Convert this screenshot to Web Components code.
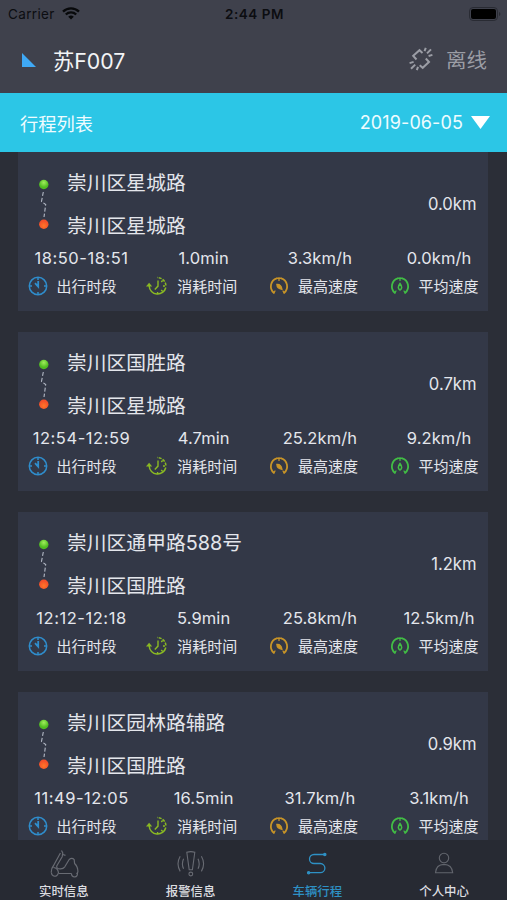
<!DOCTYPE html>
<html lang="zh-CN">
<head>
<meta charset="utf-8">
<title>行程列表</title>
<style>
    html, body { margin: 0; height: 100%; overflow: hidden; background: #2b2e37; }
</style>
</head>
<body>
<trip-app></trip-app>

<script>
const trips = [
    { from: "崇川区星城路", to: "崇川区星城路", distance: "0.0km", values: ["18:50-18:51", "1.0min", "3.3km/h", "0.0km/h"] },
    { from: "崇川区国胜路", to: "崇川区星城路", distance: "0.7km", values: ["12:54-12:59", "4.7min", "25.2km/h", "9.2km/h"] },
    { from: "崇川区通甲路588号", to: "崇川区国胜路", distance: "1.2km", values: ["12:12-12:18", "5.9min", "25.8km/h", "12.5km/h"] },
    { from: "崇川区园林路辅路", to: "崇川区国胜路", distance: "0.9km", values: ["11:49-12:05", "16.5min", "31.7km/h", "3.1km/h"] }
];

const stats = [
    { icon: "clock", label: "出行时段" },
    { icon: "elapsed", label: "消耗时间" },
    { icon: "gaugeMax", label: "最高速度" },
    { icon: "gaugeAvg", label: "平均速度" }
];

const icons = {
    wifi: `<svg width="18" height="13" viewBox="0 0 18 13" fill="none" stroke="#08090b" stroke-width="2.3">
        <path d="M1 4.6a11.4 11.4 0 0 1 16 0M3.8 7.5a7.4 7.4 0 0 1 10.4 0"/>
        <path d="M9 12.6L6.2 9.8a4 4 0 0 1 5.6 0z" fill="#08090b" stroke="none"/></svg>`,
    battery: `<svg width="32" height="14" viewBox="0 0 32 14">
        <rect x=".5" y=".5" width="28" height="13" rx="3.6" fill="none" stroke="#292b33"/>
        <rect x="2" y="2" width="25" height="10" rx="2" fill="#000"/>
        <path d="M30 5v4q1.4-.6 1.4-2T30 5z" fill="#292b33"/></svg>`,
    offline: `<svg width="26" height="26" viewBox="0 0 26 26" fill="none" stroke="#9b9da5" stroke-width="2">
        <path d="M8.500 13.500L5.200 9.800 11.500 4.200l3 2.700M17.800 12.500l3.200 3.500-6.300 5.800-3-2.600"/>
        <path d="M16.500 5.200l1.300-3.300M19 7.400l4-4M20.600 10l3.800-1.100M1.600 17.100l4-1.200M3 22.800l4.200-4.200M8.800 24.200l1.200-3.300"/></svg>`,
    route: `<svg width="14" height="54" viewBox="0 0 14 54">
        <defs>
            <radialGradient id="g" cy=".3"><stop offset="0" stop-color="#a0ec5c"/><stop offset="1" stop-color="#4fbd20"/></radialGradient>
            <radialGradient id="r" cy=".65"><stop offset="0" stop-color="#ff7728"/><stop offset="1" stop-color="#f4502a"/></radialGradient>
        </defs>
        <path d="M6.3 14L4.5 23.5l4.2 3L7 39" fill="none" stroke="#b4bac6" stroke-width="1.1" stroke-dasharray="4 2"/>
        <circle cx="6.8" cy="6.5" r="4.7" fill="url(#g)"/><circle cx="6.8" cy="46.3" r="4.7" fill="url(#r)"/></svg>`,
    clock: `<svg width="20" height="20" viewBox="0 0 20 20" fill="none" stroke="#2f8dcc" stroke-width="1.5">
        <circle cx="10" cy="10" r="8.7"/><path d="M10 1v3M10 16v3M1 10h3M16 10h3"/>
        <path d="M10.2 5v5.700L7 7.200" stroke-width="1.8"/></svg>`,
    elapsed: `<svg width="22" height="20" viewBox="0 0 22 20" fill="none" stroke="#8ab923" stroke-width="1.5">
        <path d="M3.200 10a8.400 8.400 0 0 0 16.600 1.500"/><path d="M19.900 9.500a8.400 8.400 0 0 0-8.900-7.900" stroke-dasharray="3 1.2"/>
        <path d="M0 10.600l3.100-3.800 3.100 3.800z" fill="#8ab923" stroke="none"/>
        <path d="M12 4.500v5.600L8.800 13.500M11.600 16v2M17 10h2M15.200 14l1.500 1.400M15.300 6l1.300-1.400" stroke-width="1.4"/></svg>`,
    gaugeMax: `<svg width="20" height="20" viewBox="0 0 20 20" fill="none" stroke="#c79428" stroke-width="1.8" stroke-linecap="round">
        <path d="M4.8 16.8a8.5 8.5 0 0 1 3-14.5M12.2 2.3a8.5 8.5 0 0 1 3 14.5"/><path d="M7.800 2.300q2.200-.6 4.400 0M10 1.9v2.500M4.8 16.8L6 15M15.2 16.8L14 15" stroke-width="1.3"/>
        <path d="M7.800 8.3q4.300-.5 5.200 5-5-.3-5.200-5z" fill="#c79428" stroke-width="1.2"/></svg>`,
    gaugeAvg: `<svg width="20" height="20" viewBox="0 0 20 20" fill="none" stroke="#42bd45" stroke-width="1.8" stroke-linecap="round">
        <path d="M4.8 16.8a8.5 8.5 0 0 1 3-14.5M12.2 2.3a8.5 8.5 0 0 1 3 14.5"/><path d="M7.800 2.300q2.200-.6 4.400 0M10 1.9v2.500M4.8 16.8L6 15M15.2 16.8L14 15" stroke-width="1.3"/>
        <path d="M10 7.500q3.400 4.5 0 6.500Q6.600 12 10 7.500z" stroke-width="1.5"/></svg>`,
    scooter: `<svg width="30" height="30" viewBox="0 0 30 30" fill="none" stroke="#686b73" stroke-width="1.2" stroke-linejoin="round">
        <path d="M12.500 1.500l1.300 2.500-.6 3.700-5.500 9.300q-.4 2.800 3.300 2.800 3.200.2 4.800-2l4.400-7.300q2.800-2.200 5 .2l.4 3.800q3.400 3.200 3.300 8.500l-1.300 1.800"/>
        <path d="M11.400 4L4.600 16.500Q2 19.500 2.200 23.500M13.800 5.500l2.700.9M9.300 24.500h13.200M4.500 18.500q4.500.5 5 5.500"/>
        <path d="M2.500 23.500a3.300 3.300 0 1 0 6.600.8M22.500 24.500a3 3 0 1 0 5.800-.5"/></svg>`,
    alarm: `<svg width="30" height="30" viewBox="0 0 30 30" fill="none" stroke="#686b73" stroke-width="1.1">
        <path d="M10.800 3.200q4-1.200 8 0l-2.400 17.600h-3.200z"/><circle cx="14.800" cy="25" r="1.900"/>
        <path d="M7.600 9.800q-2.400 5.200 0 10M4.200 7.200q-4.400 7.600 0 15.200M22 9.800q2.400 5.200 0 10M25.400 7.200q4.400 7.600 0 15.200"/></svg>`,
    track: `<svg width="30" height="30" viewBox="0 0 30 30" fill="none" stroke="#2e91c5" stroke-width="1.300">
        <path d="M22.500 5.500H12a4.500 4.500 0 0 0 0 9h6.300a4.500 4.500 0 0 1 0 9.200H6.800"/>
        <circle cx="22.800" cy="5.500" r="1.100" fill="#2e91c5"/><circle cx="6.600" cy="23.700" r="1.100" fill="#2e91c5"/></svg>`,
    person: `<svg width="30" height="30" viewBox="0 0 30 30" fill="none" stroke="#62656d" stroke-width="1.1">
        <circle cx="15" cy="9" r="4.700"/><path d="M6.500 23.700q.6-8 8.500-8.300 7.900.3 8.700 8.300z"/></svg>`
};

customElements.define("status-bar", class extends HTMLElement {
    constructor() {
        super();
        this.attachShadow({ mode: "open" });
        this.shadowRoot.innerHTML = `
            <style>
                :host {
                    display: grid;
                    grid-template-columns: 1fr auto 1fr;
                    align-items: center;
                    height: 27px;
                    padding: 0 6px 0 8px;
                    color: #0c0d11;
                    font-size: 13.5px;
                }
                div { display: flex; align-items: center; gap: 7px; letter-spacing: .35px; }
                b { font-weight: 600; font-size: 13.5px; letter-spacing: .5px; }
                .right { justify-content: flex-end; }
                svg { display: block; }
            </style>
            <div><span>Carrier</span>${icons.wifi}</div>
            <b>2:44 PM</b>
            <div class="right">${icons.battery}</div>
        `;
    }
});

customElements.define("vehicle-header", class extends HTMLElement {
    constructor() {
        super();
        this.attachShadow({ mode: "open" });
        this.shadowRoot.innerHTML = `
            <style>
                :host {
                    display: flex;
                    align-items: center;
                    height: 66px;
                    padding: 0 20px 2px 22px;
                    box-sizing: border-box;
                    color: #f3f4f6;
                    font-size: 21.3px;
                }
                .mark {
                    width: 14px;
                    height: 14px;
                    margin: 2px 17px 0 0;
                    background: #3fa9f5;
                    clip-path: polygon(0 0, 100% 100%, 0 100%);
                }
                .state {
                    display: flex;
                    align-items: center;
                    gap: 12px;
                    margin-left: auto;
                    color: #9b9da5;
                    font-size: 20.5px;
                }
                svg { display: block; }
            </style>
            <div class="mark"></div>
            <slot></slot>
            <div class="state">${icons.offline}<slot name="state"></slot></div>
        `;
    }
});

customElements.define("date-bar", class extends HTMLElement {
    constructor() {
        super();
        this.attachShadow({ mode: "open" });
        this.shadowRoot.innerHTML = `
            <style>
                :host {
                    display: flex;
                    align-items: center;
                    justify-content: space-between;
                    height: 59px;
                    padding: 0 17px 0 20px;
                    box-sizing: border-box;
                    background: #2cc6e6;
                    color: #effcff;
                    font-size: 18.3px;
                }
                .date { display: flex; align-items: center; gap: 8px; font-size: 18px; letter-spacing: .1px; }
                .arrow {
                    width: 19px;
                    height: 13px;
                    background: #fff;
                    clip-path: polygon(0 0, 100% 0, 50% 100%);
                }
            </style>
            <slot></slot>
            <div class="date"><slot name="date"></slot><div class="arrow"></div></div>
        `;
    }
});

customElements.define("trip-stat", class extends HTMLElement {
    constructor() {
        super();
        this.attachShadow({ mode: "open" });
    }

    setStat(stat, value) {
        this.shadowRoot.innerHTML = `
            <style>
                :host { display: block; }
                .value {
                    height: 27px;
                    margin-left: var(--value-shift, 0px);
                    line-height: 27px;
                    text-align: center;
                    font-size: 16.5px;
                    letter-spacing: var(--value-spacing, .1px);
                    white-space: nowrap;
                }
                .label { display: flex; align-items: center; height: 28px; font-size: 15px; white-space: nowrap; }
                .label span { margin-top: -2px; }
                .icon { width: 29.5px; }
                svg { display: block; margin-left: var(--icon-shift, 0px); }
            </style>
            <div class="value">${value}</div>
            <div class="label"><div class="icon">${icons[stat.icon]}</div><span>${stat.label}</span></div>
        `;
    }
});

customElements.define("trip-card", class extends HTMLElement {
    constructor() {
        super();
        this.attachShadow({ mode: "open" });
        this.shadowRoot.innerHTML = `
            <style>
                :host {
                    display: block;
                    height: 159px;
                    padding: 10px 0 0 9px;
                    box-sizing: border-box;
                    background: #333847;
                    color: #e4e6ec;
                }
                .route {
                    display: grid;
                    grid-template-columns: 40px 1fr auto;
                    align-items: center;
                    height: 83px;
                    padding-right: 11.5px;
                }
                .line { padding: 1px 0 0 10px; }
                .places { line-height: 42.5px; font-size: 19.8px; }
                #distance { margin-top: -2px; font-size: 16.6px; }
                .stats { display: grid; grid-template-columns: repeat(4, 120.7px); }
                trip-stat { width: 108px; }
                trip-stat:nth-child(1) { --value-spacing: .55px; --value-shift: 1px; --icon-shift: .5px; }
                trip-stat:nth-child(2) { --value-shift: 4px; --icon-shift: -2px; }
                trip-stat:nth-child(3) { --value-shift: -5px; --icon-shift: .5px; }
                trip-stat:nth-child(4) { --value-shift: -8px; --icon-shift: 1px; }
                svg { display: block; }
            </style>
            <div class="route">
                <div class="line">${icons.route}</div>
                <div class="places"><div id="from"></div><div id="to"></div></div>
                <div id="distance"></div>
            </div>
            <div class="stats"></div>
        `;
    }

    setTrip(trip) {
        this.shadowRoot.querySelector("#from").innerText = trip.from;
        this.shadowRoot.querySelector("#to").innerText = trip.to;
        this.shadowRoot.querySelector("#distance").innerText = trip.distance;
        let container = this.shadowRoot.querySelector(".stats");
        stats.forEach((stat, i) => {
            let element = document.createElement("trip-stat");
            element.setStat(stat, trip.values[i]);
            container.appendChild(element);
        });
    }
});

customElements.define("tab-item", class extends HTMLElement {
    constructor() {
        super();
        this.attachShadow({ mode: "open" });
        this.shadowRoot.innerHTML = `
            <style>
                :host {
                    display: flex;
                    flex-direction: column;
                    align-items: center;
                    padding: 9px 0 0 1px;
                    color: #dcdde0;
                    font-size: 12.4px;
                    line-height: 18px;
                    font-weight: 500;
                }
                :host([active]) { color: #2e91c5; }
                svg { display: block; }
                .label { margin-top: 4px; }
            </style>
            ${icons[this.getAttribute("icon")]}
            <div class="label"><slot></slot></div>
        `;
    }
});

customElements.define("trip-app", class extends HTMLElement {
    constructor() {
        super();
        this.attachShadow({ mode: "open" });
        this.shadowRoot.innerHTML = `
            <style>
                :host {
                    display: flex;
                    flex-direction: column;
                    height: 900px;
                    overflow: hidden;
                    background: #2b2e37;
                    font-family: Inter, "Noto Sans CJK SC", sans-serif;
                }
                header { background: #3f414c; }
                main {
                    display: flex;
                    flex-direction: column;
                    gap: 21px;
                    flex: 1;
                    min-height: 0;
                    padding: 0 19px 0 18px;
                    overflow: hidden;
                }
                trip-card { flex: none; }
                nav {
                    display: grid;
                    grid-template-columns: repeat(4, 1fr);
                    height: 60px;
                    background: #272a33;
                }
            </style>
            <header>
                <status-bar></status-bar>
                <vehicle-header>苏F007<span slot="state">离线</span></vehicle-header>
            </header>
            <date-bar>行程列表<span slot="date">2019-06-05</span></date-bar>
            <main></main>
            <nav>
                <tab-item icon="scooter">实时信息</tab-item>
                <tab-item icon="alarm">报警信息</tab-item>
                <tab-item icon="track" active>车辆行程</tab-item>
                <tab-item icon="person">个人中心</tab-item>
            </nav>
        `;
        let list = this.shadowRoot.querySelector("main");
        trips.forEach(trip => {
            let card = document.createElement("trip-card");
            card.setTrip(trip);
            list.appendChild(card);
        });
    }
});
</script>
</body>
</html>
